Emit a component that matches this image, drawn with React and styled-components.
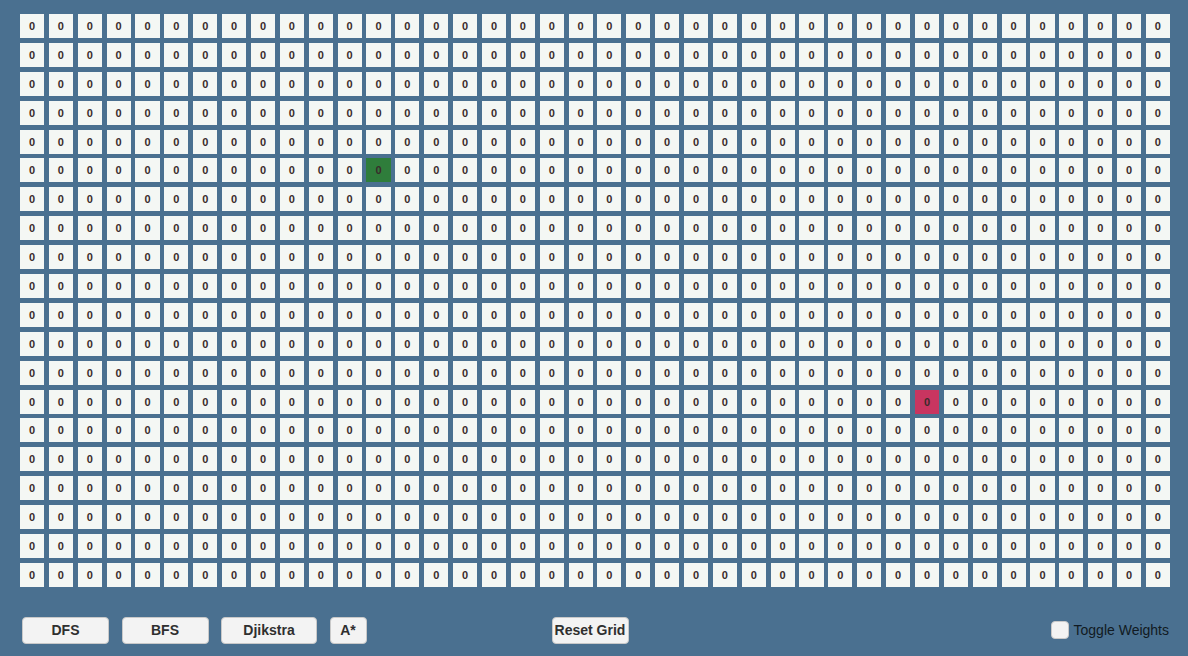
import { createGlobalStyle } from "styled-components";
import styled from "styled-components";

const ROWS = 20;
const COLS = 40;
const START = { r: 5, c: 12 };
const END = { r: 13, c: 31 };

const GlobalStyle = createGlobalStyle`
  html, body {
    margin: 0;
    padding: 0;
    background: #4a7090;
    font-family: "Liberation Sans", Arial, sans-serif;
  }
`;

const Page = styled.div`
  width: 1188px;
  height: 656px;
  box-sizing: border-box;
  padding: 14px 18px 0 20px;
  background: #4a7090;
`;

const Board = styled.div`
  display: grid;
  grid-template-columns: repeat(${COLS}, 1fr);
  grid-auto-rows: 24px;
  column-gap: 4.75px;
  row-gap: 4.9px;
  width: 1150px;
`;

const Cell = styled.div`
  display: flex;
  align-items: center;
  justify-content: center;
  background: ${(p) =>
    p.$kind === "start" ? "#2f7d3b" : p.$kind === "end" ? "#c83560" : "#f4f7f4"};
  color: #3a2b2b;
  font-size: 11px;
  font-weight: bold;
`;

const Controls = styled.div`
  display: grid;
  grid-template-columns: 1fr auto 1fr;
  align-items: center;
  margin-top: 30px;
  padding-left: 2px;
`;

const Group = styled.div`
  display: flex;
  align-items: center;
  gap: 12.5px;
  justify-self: ${(p) => p.$align || "start"};
`;

const Button = styled.button`
  width: ${(p) => p.$w}px;
  height: 27px;
  padding: 0;
  background: #f3f3f3;
  border: 1px solid #c9c9c9;
  border-radius: 4px;
  color: #2f2f2f;
  font-family: "Liberation Sans", Arial, sans-serif;
  font-size: 14px;
  font-weight: bold;
`;

const Center = styled.div`
  margin-right: 12px;
`;

const Toggle = styled.label`
  display: flex;
  align-items: center;
  gap: 5px;
  color: #111a22;
  font-size: 14px;
  margin-right: 1px;
`;

const Box = styled.span`
  display: inline-block;
  width: 16px;
  height: 16px;
  background: #f3f3f3;
  border: 1px solid #c9c9c9;
  border-radius: 4px;
`;

export default function App() {
  const cells = [];
  for (let r = 0; r < ROWS; r++) {
    for (let c = 0; c < COLS; c++) {
      let kind = "";
      if (r === START.r && c === START.c) kind = "start";
      if (r === END.r && c === END.c) kind = "end";
      cells.push(
        <Cell key={r + "-" + c} $kind={kind}>
          0
        </Cell>
      );
    }
  }

  return (
    <Page>
      <GlobalStyle />
      <Board>{cells}</Board>
      <Controls>
        <Group>
          <Button $w={87}>DFS</Button>
          <Button $w={87}>BFS</Button>
          <Button $w={96}>Djikstra</Button>
          <Button $w={37}>A*</Button>
        </Group>
        <Center>
          <Button $w={77}>Reset Grid</Button>
        </Center>
        <Group $align="end">
          <Toggle>
            <Box />
            Toggle Weights
          </Toggle>
        </Group>
      </Controls>
    </Page>
  );
}
